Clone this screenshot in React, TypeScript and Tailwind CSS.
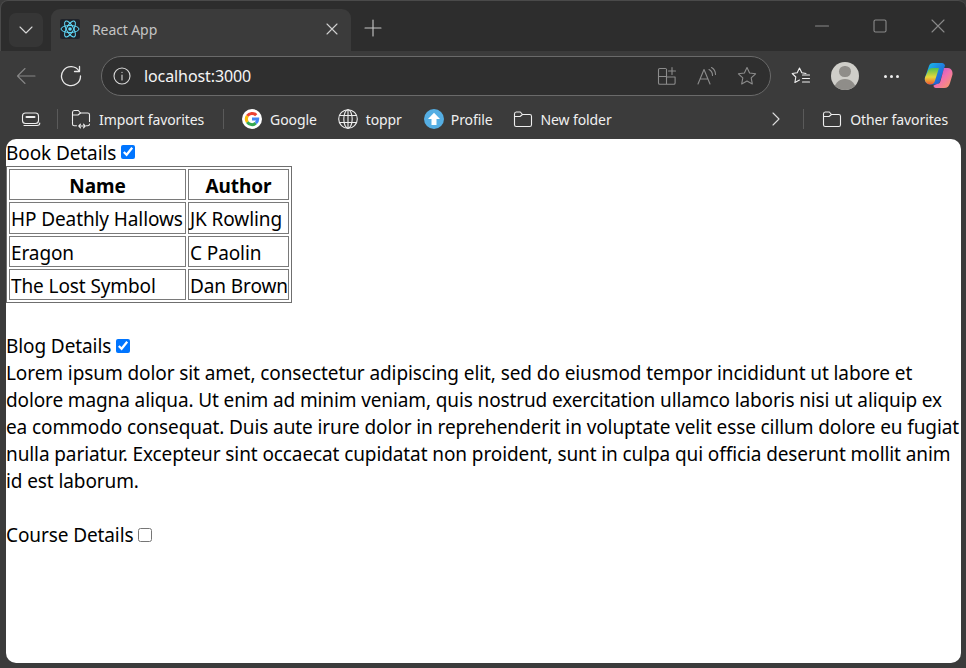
import React from "react";

const S = ({ w = 20, h = 20, vb = "0 0 20 20", className = "", children }: any) => (
  <svg width={w} height={h} viewBox={vb} fill="none" stroke="currentColor" strokeWidth={1.1} strokeLinecap="round" strokeLinejoin="round" className={"shrink-0 " + className}>{children}</svg>
);

const Folder = () => (
  <S>
    <path d="M1.500 5c0-1.200.7-2 1.800-2h4l2.200 2.500h7.200c1.200 0 1.800.8 1.800 1.800v8.400c0 1.100-.7 1.800-1.800 1.800H3.300c-1.100 0-1.800-.7-1.800-1.800z" />
    <path d="M1.500 7.500h5.500l2.500-2" />
  </S>
);

const ImportFolder = () => (
  <S>
    <path d="M1.500 12V3.500C1.500 2.400 2.200 1.500 3.300 1.500h4l2.200 2.500h7.200c1.100 0 1.800.8 1.800 1.800v6.700M1.500 12.500v2.500c0 1.100.7 1.800 1.800 1.800h2.200M15.500 16.800h1.200c1.100 0 1.800-.7 1.800-1.800" />
    <path d="M1.500 6h5.500l2.500-2" />
    <path d="M8 17h6M9.500 15.200 7.800 17l1.700 1.800M12.500 15.200l1.700 1.800-1.700 1.800" />
  </S>
);

const Google = () => (
  <svg width="20" height="20" viewBox="0 0 20 20" className="shrink-0">
    <circle cx="10" cy="10" r="10" fill="#fff" />
    <g fill="none" strokeWidth="3">
      <path d="M14.200 6.200A5.700 5.700 0 0 0 5.300 6.900" stroke="#ea4335" />
      <path d="M5.300 6.900a5.700 5.700 0 0 0 0 6.200" stroke="#fbbc05" />
      <path d="M5.300 13.100a5.700 5.700 0 0 0 8.500 1.100" stroke="#34a853" />
      <path d="M13.800 14.200A5.700 5.700 0 0 0 15.700 10H10" stroke="#4285f4" />
    </g>
  </svg>
);

const Globe = () => (
  <S>
    <circle cx="10" cy="10" r="9.300" />
    <ellipse cx="10" cy="10" rx="4.200" ry="9.300" />
    <path d="M10 .7v18.600M1.500 6.500h17M1.500 13.500h17" />
  </S>
);

const Profile = () => (
  <svg width="20" height="20" viewBox="0 0 20 20" className="shrink-0">
    <circle cx="10" cy="10" r="10" fill="#55aee3" />
    <path d="M10 3.800 16 10h-3.500v6h-5v-6H4z" fill="#fff" />
  </svg>
);

const Copilot = () => (
  <svg width="29" height="28" viewBox="0 0 29 28" className="shrink-0">
    <defs>
      <linearGradient id="cpa" x1="0" y1="0" x2="1" y2="1">
        <stop offset="0" stopColor="#19c7e8" />
        <stop offset=".5" stopColor="#1f7fe0" />
        <stop offset="1" stopColor="#2450c8" />
      </linearGradient>
      <linearGradient id="cpb" x1="0" y1="0" x2="1" y2="1">
        <stop offset="0" stopColor="#b04fd8" />
        <stop offset=".5" stopColor="#f06fb0" />
        <stop offset="1" stopColor="#f9a05a" />
      </linearGradient>
      <linearGradient id="cpc" x1="0" y1="0" x2="0" y2="1">
        <stop offset="0" stopColor="#4fc04f" />
        <stop offset=".55" stopColor="#e8d83a" />
        <stop offset="1" stopColor="#f0532e" />
      </linearGradient>
    </defs>
    <path d="M9 1h9c1.500 0 2.500 1 3 2.500l-5 16c-.6 2-2 3-4 3H6C3 22.500 0 19.500 1 15.500L5 4c.6-2 2-3 4-3z" fill="url(#cpa)" />
    <path d="M9 6h6l-3.500 11c-.5 1.800-1 5.500-5.500 5.500-3 0-6-3-5-7L3.500 10C4.500 7 6 6 9 6z" fill="url(#cpc)" />
    <path d="M20 6h4c3 0 5 3 4.500 6.500L26 21c-.8 3-2.500 5-6 5h-8c-1.500 0-2.500-1-2.500-2.500L13 22c2 0 3-1 3.500-3L20 6z" fill="url(#cpb)" />
  </svg>
);

const ReactLogo = () => (
  <div className="w-5 h-5 bg-[#20232a] rounded-[2px] shrink-0">
    <svg width="20" height="20" viewBox="0 0 20 20" fill="none" stroke="#61dafb" strokeWidth="1">
      <ellipse cx="10" cy="10" rx="9" ry="3.500" />
      <ellipse cx="10" cy="10" rx="9" ry="3.500" transform="rotate(60 10 10)" />
      <ellipse cx="10" cy="10" rx="9" ry="3.500" transform="rotate(120 10 10)" />
      <circle cx="10" cy="10" r="1.800" fill="#61dafb" stroke="none" />
    </svg>
  </div>
);

const Fav = ({ icon, label, className = "gap-2" }: any) => (
  <div className={"flex items-center " + className}>
    {icon}
    <span className="text-[14px] text-[#f0f0f0] tracking-[-0.1px] whitespace-nowrap">{label}</span>
  </div>
);

const Sep = ({ className = "" }: any) => <div className={"w-px h-5 bg-[#5a5a5a] " + className} />;

const td = "border border-[#7a7a7a] px-px pt-[4px] pb-0 whitespace-nowrap tracking-[-0.1px] leading-[25.25px]";
const books = [
  ["HP Deathly Hallows", "JK Rowling"],
  ["Eragon", "C Paolin"],
  ["The Lost Symbol", "Dan Brown"],
];

export default function App() {
  return (
    <div className="w-[966px] h-[668px] bg-[#3b3b3b] flex flex-col overflow-hidden font-['Noto_Sans',sans-serif]">
      {/* Tab strip */}
      <div className="h-[51px] bg-[#2d2d2d] flex items-end pl-[9px] shrink-0 rounded-t-[8px] border-t border-l border-[#4a4a4a]">
        <div className="w-[34px] h-[34px] mb-[4px] -ml-px bg-[#363636] rounded-[7px] flex items-center justify-center text-[#d8d8d8]">
          <S w={16} h={16} vb="0 0 16 16"><path d="M2 5l6 6 6-6" /></S>
        </div>
        <div className="w-[300px] h-[42px] ml-[8px] bg-[#3b3b3b] rounded-t-[9px] flex items-center pl-[9px] pr-[12px] pb-[2px]">
          <ReactLogo />
          <span className="ml-[12px] text-[14px] text-[#c4c4c4] flex-1 tracking-[-0.1px]">React App</span>
          <S w={14} h={14} vb="0 0 14 14" className="text-[#d0d0d0]"><path d="M2 2l10 10M12 2 2 12" /></S>
        </div>
        <S w={20} h={20} className="ml-[12px] mb-[13px] text-[#c8c8c8]"><path d="M10 2v16M2 10h16" /></S>
        <div className="flex-1" />
        <div className="flex items-center gap-[44px] pr-[21px] mb-[18px] text-[#8a8a8a]">
          <S w={14} h={14} vb="0 0 14 14"><path d="M0.500 7h13" /></S>
          <S w={14} h={14} vb="0 0 14 14"><rect x="1" y="1" width="12" height="12" rx="1.500" /></S>
          <S w={14} h={14} vb="0 0 14 14"><path d="M1 1l12 12M13 1 1 13" /></S>
        </div>
      </div>

      {/* Toolbar */}
      <div className="h-[50px] flex items-center shrink-0 pl-[16px]">
        <S className="text-[#858585]"><path d="M19 10H1.500M9 2.500 1.500 10 9 17.500" /></S>
        <S w={22} h={22} vb="0 0 22 22" className="ml-[24px] text-[#e8e8e8]" >
          <path d="M19 6A9.500 9.500 0 1 0 20.500 11" strokeWidth="1.300" />
          <path d="M19.500 1.500V6.500H14.500" strokeWidth="1.300" />
        </S>
        <div className="ml-[19px] w-[670px] h-[40px] rounded-[20px] bg-[#2f2f2f] border border-[#6a6a6a] flex items-center pl-[10px] pr-[13px]">
          <S className="text-[#d8d8d8]">
            <circle cx="10" cy="10" r="8" />
            <path d="M10 9v5M10 6.200v.3" />
          </S>
          <span className="ml-[12px] text-[16px] text-[#f5f5f5] flex-1 tracking-[-0.1px]">localhost:3000</span>
          <S className="text-[#8c8c8c]">
            <path d="M8.500 2.500H2.800C2 2.500 1.500 3 1.500 3.800V17c0 .8.5 1.300 1.300 1.300h14c.8 0 1.300-.5 1.300-1.300v-6H9.500M9.500 3v15M1.500 10.500h8M15 1.500v7M11.500 5h7" />
          </S>
          <S className="ml-[20px] text-[#8c8c8c]">
            <path d="M1 18 7 3.500 13 18M3 13h8M12 3.500c2 1 3.500 3 3.500 6M14.500 1.500c2.400 1.300 4 4 4 7" />
          </S>
          <S className="ml-[20px] text-[#8c8c8c]">
            <path d="M10 1.500l2.600 5.500 6 .8-4.400 4.100 1.100 6L10 15l-5.300 2.900 1.100-6L1.400 7.800l6-.8z" />
          </S>
        </div>
        <S className="ml-[20px] text-[#f0f0f0]">
          <path d="M15 7.500 10.800 6.800 8.500 2 6.200 6.800 1.200 7.500 4.800 11 3.900 16.500 8.500 14M11.500 9h7M11.500 12.500h7M11.500 16h7" />
        </S>
        <div className="ml-[20px] w-7 h-7 rounded-full bg-[#cfcec9] overflow-hidden flex flex-col items-center shrink-0">
          <div className="w-[12px] h-[12px] rounded-full bg-[#8f8d89] mt-[4px]" />
          <div className="w-[22px] h-[12px] rounded-t-full bg-[#8f8d89] mt-[2px]" />
        </div>
        <div className="ml-[25px] flex gap-[3px]">
          <div className="w-[3px] h-[3px] rounded-full bg-[#eeeeee]" />
          <div className="w-[3px] h-[3px] rounded-full bg-[#eeeeee]" />
          <div className="w-[3px] h-[3px] rounded-full bg-[#eeeeee]" />
        </div>
        <div className="ml-[25px]"><Copilot /></div>
      </div>

      {/* Favorites bar */}
      <div className="h-[38px] flex items-center shrink-0 pl-[21px] pb-[2px] text-[#eeeeee]">
        <S>
          <rect x="1.500" y="4" width="16" height="10.500" rx="3" />
          <path d="M5.500 8h8" strokeWidth="2" />
          <path d="M3 16.500h13c1.500 0 2.800-1 2.800-2.500" />
        </S>
        <Sep className="ml-[16px]" />
        <Fav icon={<ImportFolder />} label="Import favorites" className="ml-[13px] gap-2" />
        <Sep className="ml-[19px]" />
        <Fav icon={<Google />} label="Google" className="ml-[18px] gap-2" />
        <Fav icon={<Globe />} label="toppr" className="ml-[21px] gap-2" />
        <Fav icon={<Profile />} label="Profile" className="ml-[22px] gap-[7px]" />
        <Fav icon={<Folder />} label="New folder" className="ml-[21px] gap-[7px]" />
        <div className="flex-1" />
        <S w={14} h={14} vb="0 0 14 14" className="text-[#dddddd]"><path d="M4 1l6 6-6 6" /></S>
        <Sep className="ml-[20px]" />
        <Fav icon={<Folder />} label="Other favorites" className="ml-[18px] mr-[18px] gap-2" />
      </div>

      {/* Page */}
      <div className="h-[524px] ml-[6px] mr-[5px] bg-white rounded-[10px] text-black text-[19px] leading-[27px] overflow-hidden shrink-0">
        <div className="flex items-center h-[27px] tracking-[-0.1px]">
          <span className="mt-[2px]">Book Details</span>
          <input type="checkbox" defaultChecked readOnly className="ml-[5px] -mt-[1px] w-[14px] h-[14px]" />
        </div>
        <table className="table-fixed w-[285px] border border-[#6f6f6f] border-separate border-spacing-[2px] text-left">
          <thead>
            <tr>
              <th className={td + " text-center font-bold w-[177px]"}>Name</th>
              <th className={td + " text-center font-bold w-[101px]"}>Author</th>
            </tr>
          </thead>
          <tbody>
            {books.map((b) => (
              <tr key={b[0]}>
                <td className={td}>{b[0]}</td>
                <td className={td}>{b[1]}</td>
              </tr>
            ))}
          </tbody>
        </table>
        <div className="flex items-center h-[27px] mt-[30px] tracking-[-0.1px]">
          <span>Blog Details</span>
          <input type="checkbox" defaultChecked readOnly className="ml-[5px] -mt-[1px] w-[14px] h-[14px]" />
        </div>
        <p className="whitespace-nowrap">
          <span className="block tracking-[-0.087px]">Lorem ipsum dolor sit amet, consectetur adipiscing elit, sed do eiusmod tempor incididunt ut labore et</span>
          <span className="block tracking-[-0.12px]">dolore magna aliqua. Ut enim ad minim veniam, quis nostrud exercitation ullamco laboris nisi ut aliquip ex</span>
          <span className="block tracking-[-0.1px]">ea commodo consequat. Duis aute irure dolor in reprehenderit in voluptate velit esse cillum dolore eu fugiat</span>
          <span className="block tracking-[-0.1px]">nulla pariatur. Excepteur sint occaecat cupidatat non proident, sunt in culpa qui officia deserunt mollit anim</span>
          <span className="block tracking-[-0.1px]">id est laborum.</span>
        </p>
        <div className="flex items-center h-[27px] mt-[27px] tracking-[-0.1px]">
          <span>Course Details</span>
          <input type="checkbox" readOnly className="ml-[5px] -mt-[1px] w-[14px] h-[14px]" />
        </div>
      </div>
    </div>
  );
}
